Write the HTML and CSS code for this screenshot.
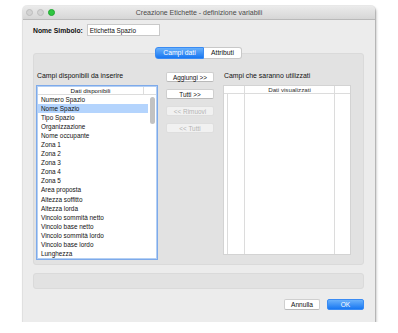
FILE: index.html
```html
<!DOCTYPE html>
<html lang="it">
<head>
  <meta charset="UTF-8" />
  <link rel="stylesheet" href="styles.css">
</head>
<body>
  <div class="window">
    <div class="titlebar">
      <div class="lights">
        <span class="light"></span>
        <span class="light"></span>
        <span class="light green"></span>
      </div>
      <div class="title">Creazione Etichette - definizione variabili</div>
      <div></div>
    </div>

    <div class="content">
      <div class="name-row">
        <span class="name-label">Nome Simbolo:</span>
        <div class="field">Etichetta Spazio</div>
      </div>

      <div class="tabs">
        <span class="tab active">Campi dati</span>
        <span class="tab">Attributi</span>
      </div>

      <div class="panel">
        <div class="col-left">
          <div class="caption">Campi disponibili da inserire</div>
          <div class="list focused">
            <div class="list-head">
              <span class="head-main">Dati disponibili</span>
              <span class="head-rest"></span>
            </div>
            <div class="list-body">
              <div class="rows">
                <div class="row">Numero Spazio</div>
                <div class="row selected">Nome Spazio</div>
                <div class="row">Tipo Spazio</div>
                <div class="row">Organizzazione</div>
                <div class="row">Nome occupante</div>
                <div class="row">Zona 1</div>
                <div class="row">Zona 2</div>
                <div class="row">Zona 3</div>
                <div class="row">Zona 4</div>
                <div class="row">Zona 5</div>
                <div class="row">Area proposta</div>
                <div class="row">Altezza soffitto</div>
                <div class="row">Altezza lorda</div>
                <div class="row">Vincolo sommità netto</div>
                <div class="row">Vincolo base netto</div>
                <div class="row">Vincolo sommità lordo</div>
                <div class="row">Vincolo base lordo</div>
                <div class="row">Lunghezza</div>
              </div>
              <div class="scrollbar"><div class="thumb"></div></div>
            </div>
          </div>
        </div>

        <div class="col-mid">
          <button class="btn">Aggiungi &gt;&gt;</button>
          <button class="btn">Tutti &gt;&gt;</button>
          <button class="btn" disabled>&lt;&lt; Rimuovi</button>
          <button class="btn" disabled>&lt;&lt; Tutti</button>
        </div>

        <div class="col-right">
          <div class="caption">Campi che saranno utilizzati</div>
          <div class="table">
            <div class="table-head">
              <span class="cell"></span>
              <span class="cell"></span>
              <span class="cell main">Dati visualizzati</span>
              <span class="cell"></span>
            </div>
            <div class="table-body">
              <span class="cell"></span>
              <span class="cell"></span>
              <span class="cell"></span>
              <span class="cell"></span>
            </div>
          </div>
        </div>
      </div>

      <div class="bar"></div>

      <div class="footer">
        <button class="btn push">Annulla</button>
        <button class="btn push primary">OK</button>
      </div>
    </div>
  </div>
</body>
</html>
```

FILE: styles.css
```css
:root {
  --win-bg: #ececec;
  --panel-bg: #e2e2e2;
  --text: #111111;
  --blue-top: #6ab1fb;
  --blue-bottom: #1877f2;
  --select: #b4d4fd;
  --line: #dcdcdc;
  --font-base: "Liberation Sans", Arial, sans-serif;
}
*, *::before, *::after { box-sizing: border-box; }
body {
  margin: 0;
  background: #ffffff;
  font-family: var(--font-base);
  color: var(--text);
}
.window {
  margin: 6px 0 0 23px;
  width: 352px;
  height: 316px;
  display: flex;
  flex-direction: column;
  background: var(--win-bg);
  border-radius: 4px 4px 0 0;
  box-shadow: 0 0 0 1px rgba(0,0,0,0.08), 1px 2px 3px rgba(0,0,0,0.35);
  overflow: hidden;
}

/* Title bar */
.titlebar {
  height: 14px;
  display: grid;
  grid-template-columns: 1fr auto 1fr;
  align-items: center;
  background: linear-gradient(#ebebeb, #d6d6d6);
  border-bottom: 1px solid #b9b9b9;
}
.lights { display: flex; gap: 4px; padding-left: 3px; }
.light {
  width: 7px;
  height: 7px;
  border-radius: 50%;
  background: #d3d3d3;
  border: 0.5px solid #bcbcbc;
}
.light.green { background: #2fc641; border-color: #22a632; }
.title { font-size: 7px; color: #4a4a4a; }

.content {
  flex: 1;
  display: flex;
  flex-direction: column;
  padding: 4px 11px 0 10px;
}

/* Name row */
.name-row { display: flex; align-items: center; gap: 4px; height: 12px; }
.name-label { font-size: 6.8px; font-weight: bold; }
.field {
  width: 73px;
  height: 12px;
  line-height: 11px;
  padding-left: 2px;
  font-size: 6.4px;
  background: #ffffff;
  border: 1px solid #c9c9c9;
}

/* Tabs */
.tabs {
  display: flex;
  justify-content: center;
  margin-top: 11px;
  margin-bottom: -6px;
  position: relative;
  z-index: 1;
}
.tab {
  height: 12px;
  line-height: 12px;
  font-size: 6.8px;
  padding: 0 6px;
  background: #ffffff;
  border: 1px solid #c8c8c8;
  border-left: none;
  border-radius: 0 3px 3px 0;
}
.tab.active {
  width: 49px;
  text-align: center;
  color: #ffffff;
  background: linear-gradient(var(--blue-top), var(--blue-bottom));
  border: 1px solid #3a8bf3;
  border-radius: 3px 0 0 3px;
  line-height: 10px;
}
.tab:not(.active) { width: 38px; text-align: center; line-height: 10px; }

/* Panel */
.panel {
  height: 212px;
  display: flex;
  padding: 17px 12px 9px 2px;
  background: var(--panel-bg);
  border-radius: 3px;
  border: 1px solid #dadada;
}
.caption { font-size: 6.9px; line-height: 10px; margin: 0 0 4px 1px; }

.col-left { width: 122px; display: flex; flex-direction: column; }
.list {
  flex: 1;
  display: flex;
  flex-direction: column;
  background: #ffffff;
  border: 1px solid #7eaaea;
  box-shadow: inset 0 0 0 1px #b3cff4;
}
.list-head {
  height: 8px;
  display: flex;
  border-bottom: 1px solid var(--line);
  font-size: 6.2px;
  line-height: 7px;
  margin: 1px 1px 0;
}
.head-main { flex: 1; text-align: center; border-right: 1px solid var(--line); }
.head-rest { width: 12px; }
.list-body { flex: 1; display: flex; padding: 0 1px 1px 1px; }
.rows { flex: 1; }
.row {
  height: 9.06px;
  line-height: 9px;
  font-size: 6.4px;
  padding-left: 3px;
  white-space: nowrap;
}
.row.selected { background: var(--select); }
.scrollbar { width: 8px; padding: 2px 1.5px; }
.thumb { height: 27px; border-radius: 3px; background: #c2c2c2; }

/* Middle buttons */
.col-mid {
  width: 48px;
  margin: 1px 9px 0 8px;
  display: flex;
  flex-direction: column;
  gap: 7px;
}
.btn {
  height: 10px;
  padding: 0;
  font-family: var(--font-base);
  font-size: 6.4px;
  color: var(--text);
  background: #ffffff;
  border: 1px solid #cfcfcf;
  border-bottom-color: #b9b9b9;
  border-radius: 2px;
}
.btn:disabled { color: #b4b4b4; background: #f1f1f1; border-color: #dedede; }

/* Right table */
.col-right { flex: 1; display: flex; flex-direction: column; }
.table {
  flex: 1;
  display: flex;
  flex-direction: column;
  background: #ffffff;
  border: 1px solid #d3d3d3;
}
.table-head, .table-body {
  display: grid;
  grid-template-columns: 4px 17px 90px 1fr;
}
.table-head { height: 8px; border-bottom: 1px solid var(--line); font-size: 6.2px; line-height: 7px; }
.table-body { flex: 1; }
.cell { border-right: 1px solid var(--line); }
.cell:last-child { border-right: none; }
.table-head .cell:first-child { border-right-color: transparent; }
.cell.main { text-align: center; color: #333; }

/* Bottom */
.bar {
  height: 16px;
  margin-top: 8px;
  background: var(--panel-bg);
  border-radius: 3px;
  border: 1px solid #dadada;
}
.footer {
  display: flex;
  justify-content: flex-end;
  gap: 7px;
  margin-top: 10px;
}
.btn.push { height: 11px; width: 36px; font-size: 6.6px; }
.btn.primary {
  width: 37px;
  color: #ffffff;
  background: linear-gradient(var(--blue-top), var(--blue-bottom));
  border-color: #3a8bf3;
}
```
